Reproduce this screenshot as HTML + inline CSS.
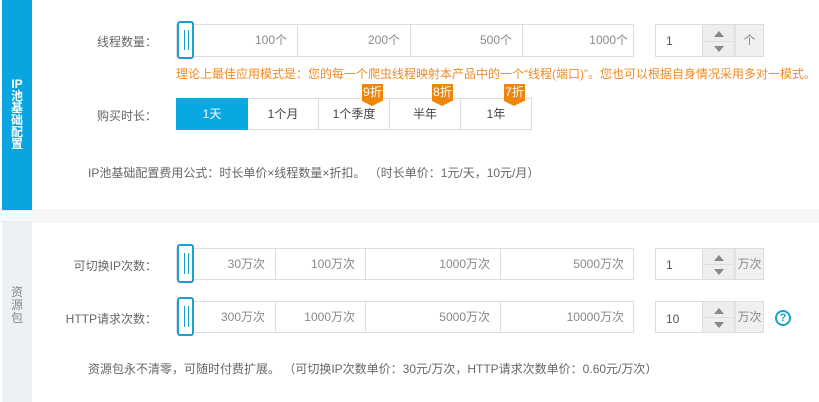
<!DOCTYPE html>
<html><head><meta charset="utf-8"><style>
*{margin:0;padding:0;box-sizing:border-box}
body{width:819px;height:402px;background:#fff;font-family:"Liberation Sans","Noto Sans CJK SC",sans-serif;font-size:12px;color:#666;position:relative;overflow:hidden}
.a{position:absolute}
.side1{left:2px;top:0;width:30px;height:210px;background:#0aa4e0;color:#fff;font-weight:bold;font-size:12px;text-align:center;line-height:12px;padding-top:78px}
.side2{left:2px;top:222px;width:30px;height:180px;background:#eef1f3;color:#888;font-size:12px;text-align:center;line-height:13px;padding-top:64px}
.sep{left:0;top:210px;width:819px;height:12px;background:#f7f8f9;border-top:1px solid #eee;border-bottom:1px solid #eee}
.lbl{text-align:right;width:145px;left:12px;font-size:12px;color:#666}
.track{border:1px solid #ddd;background:#fff;left:176px;width:458px}
.seg{position:absolute;top:0;bottom:0;border-right:1px solid #ddd;text-align:right;padding-right:10px;color:#888}
.handle{position:absolute;width:17px;border:2px solid #1a9fd0;border-radius:3px;background:#fff}
.handle:before,.handle:after{content:"";position:absolute;top:7px;bottom:7px;width:1px;background:#1a9fd0}
.handle:before{left:5px}.handle:after{left:9px}
.num{border:1px solid #ddd;left:655px;width:48px;padding-left:10px;color:#555}
.spin{left:703px;width:32px;background:#eee;border:1px solid #ddd;border-left:none}
.spin i{position:absolute;left:11px;width:0;height:0;border-left:5px solid transparent;border-right:5px solid transparent}
.unit{left:735px;width:29px;background:#f0f0f0;border:1px solid #ddd;border-left:1px solid #e4e4e4;text-align:center;color:#888}
.btn{top:98px;height:32px;line-height:31px;border:1px solid #ddd;text-align:center;color:#444;background:#fff}
.badge{top:84px;width:21px;height:17px;background:#f0850c;color:#fff;font-size:12px;line-height:17px;text-align:center}
.badge:after{content:"";position:absolute;left:0;top:17px;border-left:10.5px solid transparent;border-right:10.5px solid transparent;border-top:5px solid #f0850c}
</style></head><body>
<div class="a side1">IP<br>池<br>基<br>础<br>配<br>置</div>
<div class="a sep"></div>
<div class="a side2">资<br>源<br>包</div>

<div class="a lbl" style="top:33px">线程数量：</div>
<div class="a track" style="top:24px;height:33px;line-height:31px">
<div class="seg" style="left:0;width:121px">100个</div>
<div class="seg" style="left:121px;width:113px">200个</div>
<div class="seg" style="left:234px;width:112px">500个</div>
<div class="seg" style="left:346px;width:111px;border:none;padding-right:6px">1000个</div>
</div>
<div class="handle" style="left:177px;top:21px;height:38px"></div>
<div class="a num" style="top:24px;height:33px;line-height:33px">1</div>
<div class="a spin" style="top:24px;height:33px"><i style="top:6px;border-bottom:6px solid #888"></i><div class="a" style="left:0;right:0;top:16px;border-top:1px solid #ddd"></div><i style="top:21px;border-top:6px solid #888"></i></div>
<div class="a unit" style="top:24px;height:33px;line-height:31px">个</div>
<div class="a" style="left:176px;top:65px;color:#f08a24;font-size:12px;white-space:nowrap">理论上最佳应用模式是：您的每一个爬虫线程映射本产品中的一个“线程(端口)”。您也可以根据自身情况采用多对一模式。</div>

<div class="a lbl" style="top:107px">购买时长：</div>
<div class="a btn" style="left:176px;width:72px;background:#0aa8e0;border-color:#0aa8e0;color:#fff">1天</div>
<div class="a btn" style="left:248px;width:71px;border-left:none">1个月</div>
<div class="a btn" style="left:319px;width:71px;border-left:none">1个季度</div>
<div class="a btn" style="left:390px;width:71px;border-left:none">半年</div>
<div class="a btn" style="left:461px;width:71px;border-left:none">1年</div>
<div class="a badge" style="left:362px">9折</div>
<div class="a badge" style="left:432px">8折</div>
<div class="a badge" style="left:504px">7折</div>
<div class="a" style="left:88px;top:164px;color:#666;white-space:nowrap">IP池基础配置费用公式：时长单价×线程数量×折扣。 （时长单价：1元/天，10元/月）</div>

<div class="a lbl" style="top:257px">可切换IP次数：</div>
<div class="a track" style="top:248px;height:32px;line-height:30px">
<div class="seg" style="left:0;width:99px">30万次</div>
<div class="seg" style="left:99px;width:90px">100万次</div>
<div class="seg" style="left:189px;width:135px">1000万次</div>
<div class="seg" style="left:324px;width:133px;border:none">5000万次</div>
</div>
<div class="handle" style="left:177px;top:244px;height:39px"></div>
<div class="a num" style="top:248px;height:32px;line-height:32px">1</div>
<div class="a spin" style="top:248px;height:32px"><i style="top:6px;border-bottom:6px solid #888"></i><div class="a" style="left:0;right:0;top:15px;border-top:1px solid #ddd"></div><i style="top:20px;border-top:6px solid #888"></i></div>
<div class="a unit" style="top:248px;height:32px;line-height:30px">万次</div>

<div class="a lbl" style="top:310px">HTTP请求次数：</div>
<div class="a track" style="top:301px;height:32px;line-height:30px">
<div class="seg" style="left:0;width:99px">300万次</div>
<div class="seg" style="left:99px;width:90px">1000万次</div>
<div class="seg" style="left:189px;width:135px">5000万次</div>
<div class="seg" style="left:324px;width:133px;border:none">10000万次</div>
</div>
<div class="handle" style="left:177px;top:297px;height:39px"></div>
<div class="a num" style="top:301px;height:32px;line-height:34px">10</div>
<div class="a spin" style="top:301px;height:32px"><i style="top:6px;border-bottom:6px solid #888"></i><div class="a" style="left:0;right:0;top:15px;border-top:1px solid #ddd"></div><i style="top:20px;border-top:6px solid #888"></i></div>
<div class="a unit" style="top:301px;height:32px;line-height:30px">万次</div>
<div class="a" style="left:775px;top:310px;width:16px;height:16px;border:2px solid #1aa0c8;border-radius:50%;color:#1aa0c8;font-weight:bold;font-size:11px;text-align:center;line-height:12px">?</div>
<div class="a" style="left:88px;top:360px;color:#666;white-space:nowrap">资源包永不清零，可随时付费扩展。 （可切换IP次数单价：30元/万次，HTTP请求次数单价：0.60元/万次）</div>
</body></html>
